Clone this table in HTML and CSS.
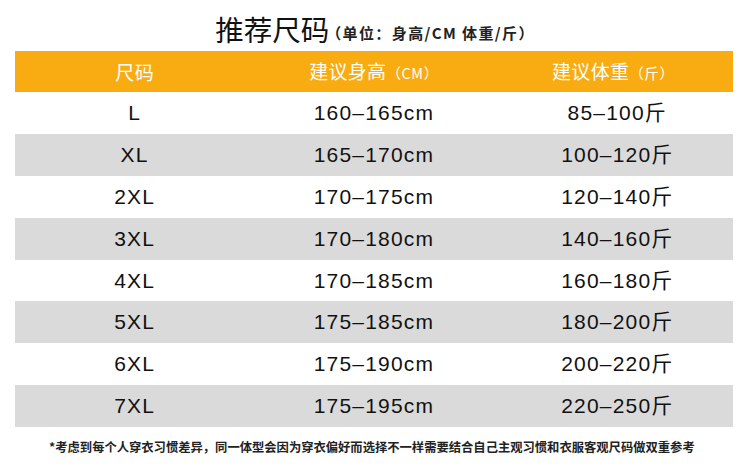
FILE: index.html
```html
<!DOCTYPE html>
<html lang="zh">
<head>
<meta charset="utf-8">
<link rel="stylesheet" href="styles.css">
</head>
<body>
<div class="page">
  <div class="title-row">
    <h1 class="title">推荐尺码</h1>
    <span class="unit">（单位：身高/CM 体重/斤）</span>
  </div>
  <div class="table">
    <div class="row head">
      <div class="cell">尺码</div>
      <div class="cell">建议身高<span class="small">（CM）</span></div>
      <div class="cell">建议体重<span class="small">（斤）</span></div>
    </div>
    <div class="row"><div class="cell">L</div><div class="cell">160–165cm</div><div class="cell">85–100斤</div></div>
    <div class="row grey"><div class="cell">XL</div><div class="cell">165–170cm</div><div class="cell">100–120斤</div></div>
    <div class="row"><div class="cell">2XL</div><div class="cell">170–175cm</div><div class="cell">120–140斤</div></div>
    <div class="row grey"><div class="cell">3XL</div><div class="cell">170–180cm</div><div class="cell">140–160斤</div></div>
    <div class="row"><div class="cell">4XL</div><div class="cell">170–185cm</div><div class="cell">160–180斤</div></div>
    <div class="row grey"><div class="cell">5XL</div><div class="cell">175–185cm</div><div class="cell">180–200斤</div></div>
    <div class="row"><div class="cell">6XL</div><div class="cell">175–190cm</div><div class="cell">200–220斤</div></div>
    <div class="row grey"><div class="cell">7XL</div><div class="cell">175–195cm</div><div class="cell">220–250斤</div></div>
  </div>
  <p class="note">*考虑到每个人穿衣习惯差异，同一体型会因为穿衣偏好而选择不一样需要结合自己主观习惯和衣服客观尺码做双重参考</p>
</div>
</body>
</html>
```
FILE: styles.css
```css
html, body {
  margin: 0;
  padding: 0;
  background: #ffffff;
}
.page {
  width: 750px;
  height: 476px;
  font-family: "Liberation Sans", "Noto Sans CJK SC", sans-serif;
  color: #111;
}
.title-row {
  height: 51px;
  display: flex;
  align-items: flex-end;
  justify-content: center;
  padding-left: 0;
  box-sizing: border-box;
}
.title {
  margin: 0 0 5px 0;
  font-size: 28.5px;
  font-weight: 400;
  line-height: 34px;
  color: #111;
  font-family: "Noto Sans CJK SC", sans-serif;
}
.unit {
  margin: 0 0 9px -3px;
  font-size: 15px;
  letter-spacing: 1.4px;
  line-height: 18px;
  font-weight: 700;
  font-family: "Noto Sans CJK SC", sans-serif;
  color: #222;
}
.table {
  margin: 0 17px 0 15px;
}
.row {
  display: grid;
  grid-template-columns: 1fr 1fr 1fr;
  height: 41.9px;
  align-items: center;
  font-size: 21px;
  letter-spacing: 1.2px;
}
.row.head {
  height: 41px;
  background: #f8ac12;
  color: #fff;
  font-size: 19px;
  letter-spacing: 0.3px;
  font-family: "Noto Sans CJK SC", sans-serif;
}
.row.grey {
  background: #dadada;
}
.cell {
  text-align: center;
  line-height: 24px;
}
.row .cell:nth-child(3) {
  padding-left: 8px;
}
.row.head .cell:nth-child(3) {
  padding-left: 0;
}
.small {
  font-size: 14.5px;
  letter-spacing: 0.6px;
}
.note {
  margin: 12px 0 0 0;
  padding-left: 49px;
  font-size: 12.3px;
  font-weight: 700;
  line-height: 16px;
  font-family: "Noto Sans CJK SC", sans-serif;
  color: #222;
}
```
